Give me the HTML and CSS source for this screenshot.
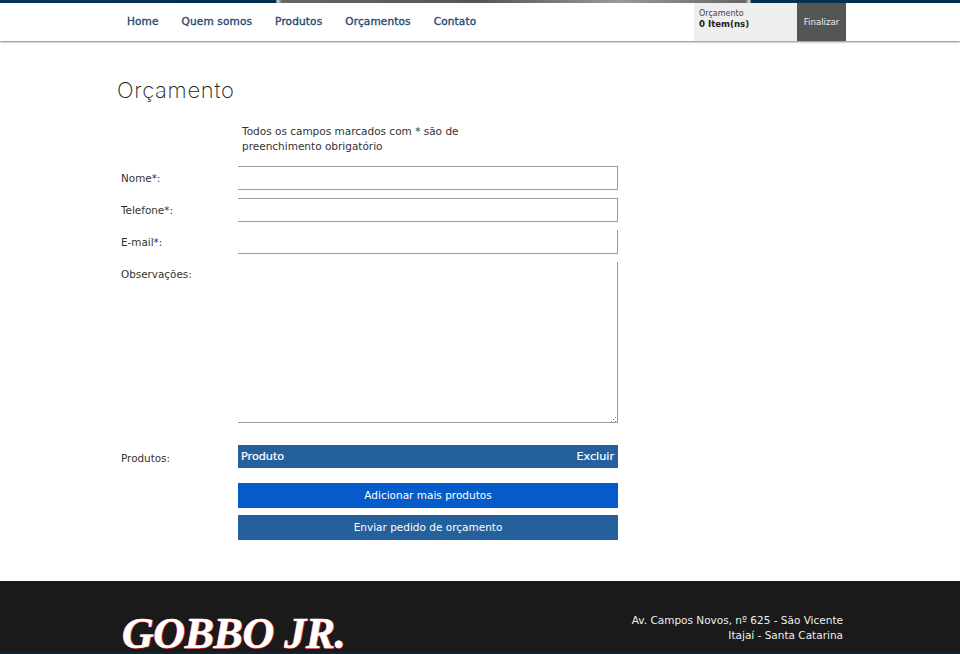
FILE: index.html
```html
<!DOCTYPE html>
<html lang="pt-BR">
<head>
<meta charset="utf-8">
<title>Orçamento</title>
<link rel="stylesheet" href="styles.css">
</head>
<body>
<header class="header">
  <div class="strip"></div>
  <div class="bar">
    <nav class="nav">
      <a>Home</a><a>Quem somos</a><a>Produtos</a><a>Orçamentos</a><a>Contato</a>
    </nav>
    <div class="cart">
      <div class="cart-info"><span>Orçamento</span><strong>0 Item(ns)</strong></div>
      <a class="cart-finish">Finalizar</a>
    </div>
  </div>
</header>
<main class="main">
  <h1 class="title">Orçamento</h1>
  <form class="form">
    <p class="note">Todos os campos marcados com * são de preenchimento obrigatório</p>
    <div class="row"><label>Nome*:</label><div class="input"></div></div>
    <div class="row"><label>Telefone*:</label><div class="input"></div></div>
    <div class="row"><label>E-mail*:</label><div class="input no-top"></div></div>
    <div class="row"><label>Observações:</label>
      <div class="input no-top area">
        <svg class="grip" width="6" height="6" viewBox="0 0 6 6"><path d="M0 5h1v1H0zM4 5h1v1H4zM4 1h1v1H4zM2 3h1v1H2z" fill="#888"/></svg>
      </div>
    </div>
    <div class="row products"><label>Produtos:</label>
      <div class="table-head"><span>Produto</span><span>Excluir</span></div>
    </div>
    <div class="actions">
      <a class="btn btn-add">Adicionar mais produtos</a>
      <a class="btn btn-send">Enviar pedido de orçamento</a>
    </div>
  </form>
</main>
<footer class="footer">
  <div class="footer-body">
    <div class="logo">GOBBO JR.</div>
    <address class="address">Av. Campos Novos, nº 625 - São Vicente<br>Itajaí - Santa Catarina</address>
  </div>
  <div class="footer-edge"></div>
</footer>
</body>
</html>
```
FILE: styles.css
```css
* { box-sizing: border-box; }
html, body { margin: 0; height: 654px; overflow: hidden; }
body { background: #fff; font-family: "DejaVu Sans", "Liberation Sans", sans-serif; color: #333; font-size: 10.5px; }

.header { height: 41px; box-shadow: 0 1px 2px rgba(0,0,0,.5); position: relative; }
.strip { height: 3px; background: linear-gradient(90deg, #06335a 0, #03304f 276px, #ddd 277px, #666 282px, #555 480px, #999 620px, #666 745px, #ddd 750px, #03304f 751px, #03304f 100%); }
.bar { height: 38px; display: flex; justify-content: space-between; padding: 0 114px 0 127px; }
.nav { display: flex; gap: 23px; align-items: center; padding-bottom: 2px; }
.nav a { color: #24496f; font-size: 10.5px; letter-spacing: .15px; -webkit-text-stroke: .35px #24496f; white-space: nowrap; }
.cart { display: flex; }
.cart-info { width: 103px; background: #eee; padding: 6px 5px; display: flex; flex-direction: column; font-size: 8px; line-height: 10px; color: #444; }
.cart-info strong { color: #222; font-weight: 600; font-size: 8.6px; }
.cart-finish { width: 49px; background: #555; color: #eee; font-size: 8.6px; text-align: center; line-height: 38px; }

.main { height: 540px; padding: 36px 0 0 117px; }
.title { margin: 0 0 21px; font-family: "Inter", sans-serif; font-weight: 200; font-size: 22px; line-height: 26px; color: #222; letter-spacing: .7px; }
.form { width: 501px; }
.note { margin: 0 0 12px 125px; width: 240px; font-size: 10.5px; line-height: 15px; }
.row { display: flex; margin-bottom: 8px; }
.row label { width: 121px; padding: 5px 0 0 4px; font-size: 10.4px; line-height: 14px; }
.input { width: 380px; height: 24px; border: solid #999; border-width: 1px 1px 1px 0; background: #fff; position: relative; }
.no-top { border-top: 0; }
.area { height: 161px; margin-bottom: 14px; }
.grip { position: absolute; right: 0; bottom: 0; }
.products { margin-bottom: 15px; height: 23px; overflow: hidden; }
.products label { padding-top: 6px; }
.table-head { width: 380px; height: 23px; background: #24609b; color: #fff; font-size: 11.2px; line-height: 23px; padding: 0 4px 0 3px; display: flex; justify-content: space-between; -webkit-text-stroke: .2px #fff; }
.actions { margin-left: 121px; display: flex; flex-direction: column; gap: 7px; }
.btn { height: 25px; line-height: 25px; text-align: center; color: #fff; font-size: 10.5px; }
.btn-add { background: #045bc9; }
.btn-send { background: #24609b; }

.footer { height: 73px; background: #1a1a1a; display: flex; flex-direction: column; overflow: hidden; }
.footer-body { flex: 1; display: flex; justify-content: space-between; padding: 0 117px 0 122px; min-height: 0; }
.footer-edge { height: 2px; background: #12242f; }
.logo { font-family: "Liberation Serif", serif; font-weight: 700; font-style: italic; font-size: 44px; line-height: 36px; margin-top: 35px; color: #fff; letter-spacing: -.45px; -webkit-text-stroke: .5px #fff; text-shadow: 1px 0 0 #b01818, -1px 0 0 #b01818, 0 1px 0 #b01818; white-space: nowrap; }
.address { margin-top: 32px; font-style: normal; text-align: right; color: #eee; font-size: 10.5px; line-height: 15px; }
```
